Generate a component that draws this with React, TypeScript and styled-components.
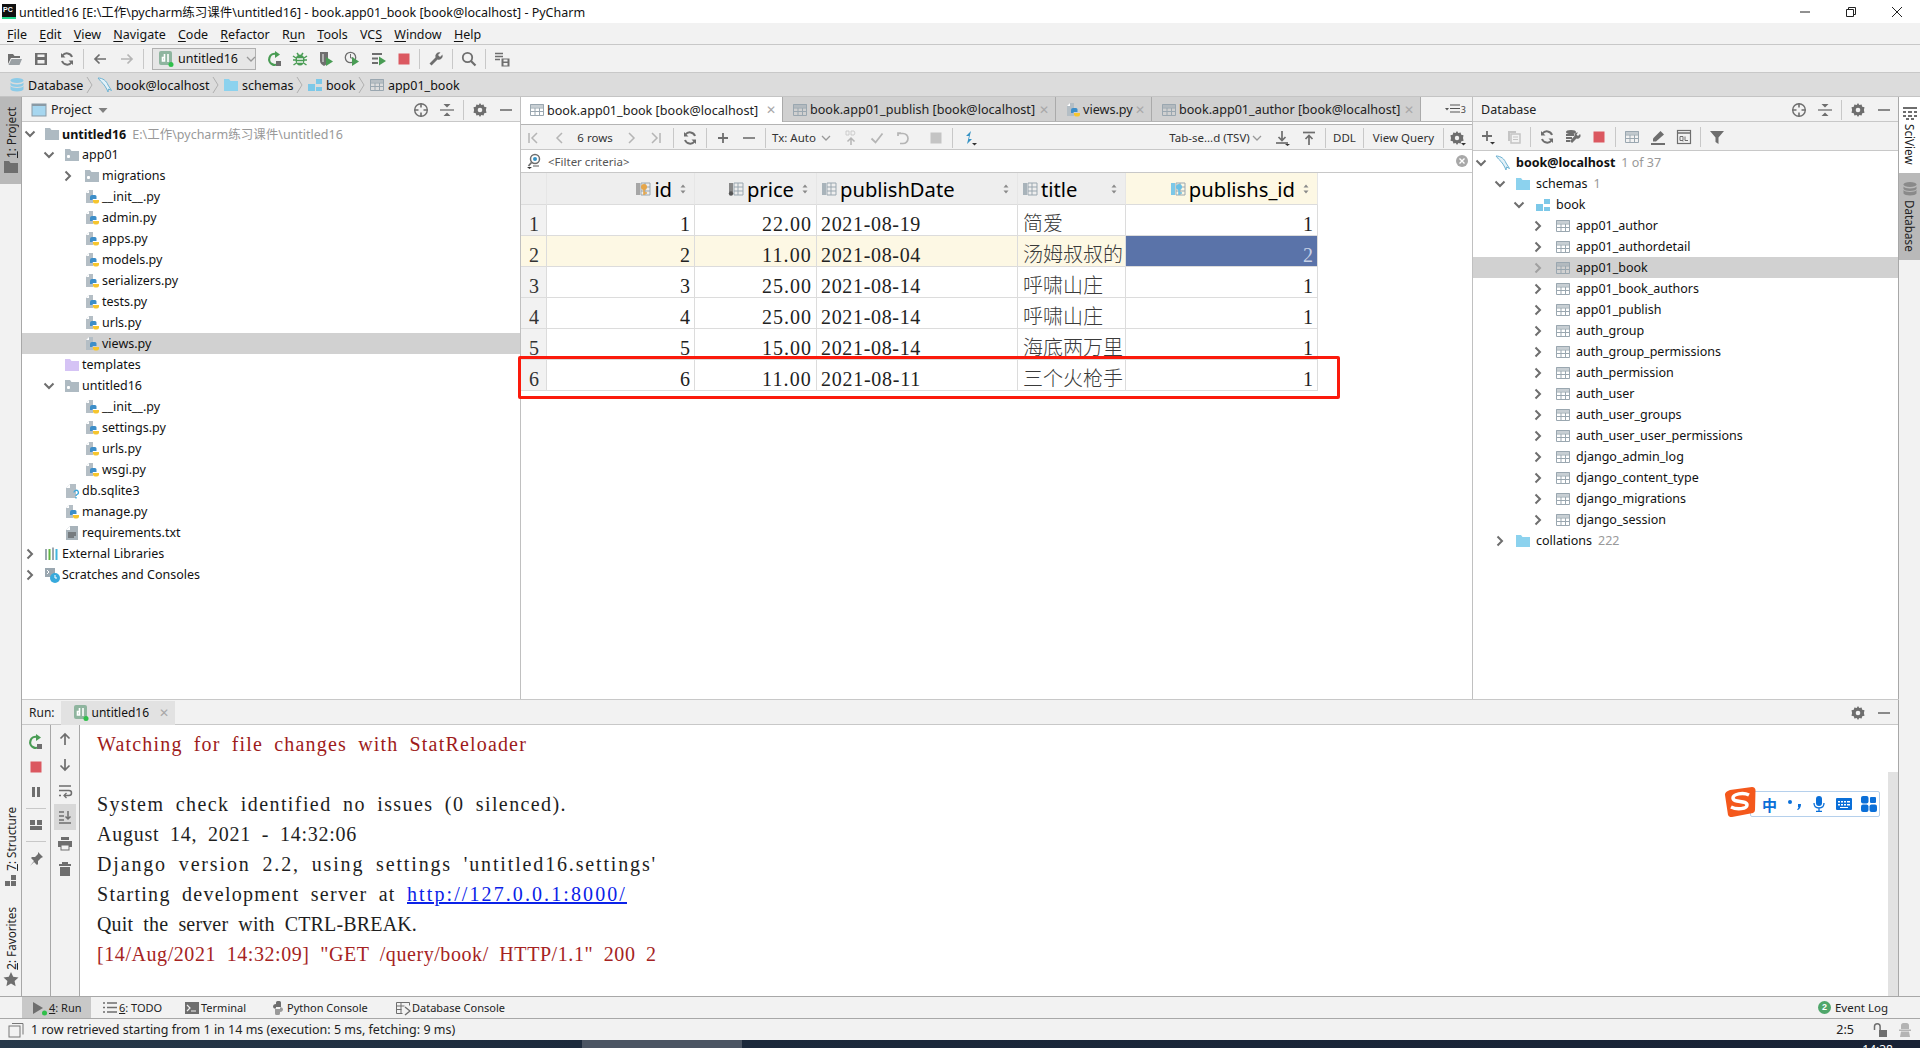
import React from 'react';
import styled, { createGlobalStyle } from 'styled-components';

const GlobalStyle = createGlobalStyle`
  html, body { margin: 0; padding: 0; background: #f2f2f2; }
  body { font-family: "Noto Sans", "Noto Sans CJK SC", sans-serif; font-size: 12.5px; color: #111; }
  * { box-sizing: border-box; }
`;

const Page = styled.div`
  width: 1920px; height: 1048px; overflow: hidden; display: flex; flex-direction: column;
  position: relative; background: #f2f2f2;
`;

/* ---------- glyphs ---------- */
const G = styled.svg.attrs({ viewBox: '0 0 16 16', xmlns: 'http://www.w3.org/2000/svg' })`
  width: 16px; height: 16px; flex: none; display: block;
`;
const GRAY = '#6e6e6e';
const Chevron = ({ open, light }: { open?: boolean; light?: boolean }) => (
  <G><path d={open ? 'M3.5 5.5 8 10l4.5-4.5' : 'M5.5 3.5 10 8l-4.5 4.5'} fill="none" stroke={light ? '#a0a0a0' : GRAY} strokeWidth="2" /></G>
);
const Folder = ({ c = '#aebac2', dot }: { c?: string; dot?: boolean }) => (
  <G><path d="M1 2h5l1.500 2H15v10H1z" fill={c} />{dot && <rect x="3" y="8" width="3" height="3" rx="1" fill="#fff" />}</G>
);
const PyFile = () => (
  <G>
    <path d="M2 4l3-3h4v13H2z" fill="#b4bec5" /><path d="M5 1v3H2z" fill="#fff" />
    <path d="M6 8a2 2 0 0 1 2-2h3a1.500 1.500 0 0 1 1.500 1.500V10H8.500v1H6z" fill="#3d8ec9" />
    <path d="M9 11h6v1.500a2 2 0 0 1-2 2h-2A2 2 0 0 1 9 12.500z" fill="#f6c52e" />
  </G>
);
const DocQ = () => (
  <G><path d="M2 5l4-4h6v14H2z" fill="#b4bec5" /><path d="M6 1v4H2z" fill="#fff" />
    <path d="M10 9.500a2.200 2.200 0 1 1 3 2c-.8.4-1 .8-1 1.500m0 1v1.500" fill="none" stroke="#3aa7dc" strokeWidth="1.300" /></G>
);
const DocText = () => (
  <G><path d="M2 5l4-4h8v14H2z" fill="#a8b3ba" /><path d="M6 1v4H2z" fill="#fff" /><path d="M4 8h8M4 10h8M4 12h6" stroke="#444" strokeWidth="1" /></G>
);
const Libs = () => (
  <G><rect x="1" y="3" width="2" height="11" fill="#9aa7b0" /><rect x="4.500" y="3" width="2" height="11" fill="#62b543" /><rect x="8" y="1.500" width="2" height="12.500" fill="#9aa7b0" /><rect x="11.500" y="3" width="2" height="11" fill="#40b6e0" /></G>
);
const Scratch = () => (
  <G><path d="M1 1h10v9H1z" fill="#9aa7b0" /><path d="M3 3l2 2-2 2" fill="none" stroke="#fff" /><circle cx="11" cy="11" r="5" fill="#36a9dc" /><path d="M11 8v3h2" fill="none" stroke="#fff" /></G>
);
const Dolphin = () => (
  <G><path d="M1 1c5 0 8.500 3 10 7l3.500 5.500-3-1.500-.5 3C9.500 11 7 7 3.500 4z" fill="#e3f1f8" stroke="#6eb3d3" strokeWidth="1" /></G>
);
const Schema = () => (
  <G><rect x="9" y="2" width="6" height="5" fill="#7cc8e8" /><rect x="1" y="7" width="7" height="7" fill="#7cc8e8" /><rect x="9" y="10" width="6" height="4" fill="#7cc8e8" /></G>
);
const TableI = () => (
  <G><path d="M1.500 2.500h13v11h-13z M1.500 6h13 M1.500 9.500h13 M6 6v7.500 M10.500 6v7.500" fill="none" stroke="#9aa7b0" strokeWidth="1" /><rect x="1" y="2" width="14" height="3.500" fill="#9aa7b0" opacity=".55" /></G>
);
const DbStack = ({ c = '#8ccbe8' }: { c?: string }) => (
  <G><ellipse cx="8" cy="3.500" rx="6.500" ry="2.500" fill={c} /><path d="M1.500 5.500c1 2.500 12 2.500 13 0V8c-1 2.500-12 2.500-13 0zM1.500 9c1 2.500 12 2.500 13 0v3.500c-1 2.500-12 2.500-13 0z" fill={c} /></G>
);
const Target = () => (
  <G><circle cx="8" cy="8" r="6.300" fill="none" stroke={GRAY} strokeWidth="1.400" /><path d="M8 1.500v4M8 10.500v4M1.500 8h4M10.500 8h4" stroke={GRAY} strokeWidth="1.600" /></G>
);
const Collapse = () => (
  <G><path d="M1 8h14" stroke={GRAY} strokeWidth="1.300" /><path d="M4.500 2h7L8 5.500zM4.500 14h7L8 10.500z" fill={GRAY} /></G>
);
const Gear = () => (
  <G><path d="M8 1l1.300 2 2.300-.6.600 2.300 2.300.6L13.900 8l.6 2.700-2.300.6-.6 2.300-2.300-.6L8 15l-1.300-2-2.300.6-.6-2.300-2.300-.6L2.100 8l-.6-2.700 2.300-.6.600-2.300 2.300.6z" fill={GRAY} /><circle cx="8" cy="8" r="2.300" fill="#f2f2f2" /></G>
);
const Minus = () => <G><path d="M2 8h12" stroke={GRAY} strokeWidth="1.600" /></G>;
const Arrow = ({ d, c = GRAY }: { d: 'l' | 'r' | 'u' | 'd'; c?: string }) => {
  const p = { l: 'M14 8H3M7.500 3.500 3 8l4.500 4.500', r: 'M2 8h11M8.500 3.500 13 8l-4.500 4.500', u: 'M8 14V3M3.500 7.500 8 3l4.500 4.500', d: 'M8 2v11M3.500 8.500 8 13l4.500-4.500' }[d];
  return <G><path d={p} fill="none" stroke={c} strokeWidth="1.700" /></G>;
};
const OpenFolder = () => <G><path d="M1 3h5l1.500 2H13v2H4L1 13z" fill={GRAY} /><path d="M4.500 8H15l-2.500 6H1.500z" fill="#9aa0a4" /></G>;
const Save = () => <G><path d="M2 2h12v12H2z" fill={GRAY} /><rect x="4.500" y="3.500" width="7" height="2.500" fill="#f2f2f2" /><rect x="4.500" y="9" width="7" height="3.500" fill="#f2f2f2" /></G>;
const Sync = ({ c = GRAY }: { c?: string }) => (
  <G><path d="M13 6a5.500 5.500 0 0 0-9.500-1.500M3 10a5.500 5.500 0 0 0 9.500 1.500" fill="none" stroke={c} strokeWidth="2" /><path d="M2 2v4.500h4.500zM14 14V9.500H9.500z" fill={c} /></G>
);
const ReRun = () => <G><path d="M12.500 11A5.500 5.500 0 1 1 9 3" fill="none" stroke="#499c54" strokeWidth="2.200" /><path d="M8 0l5 3.500L8 7z" fill="#499c54" /><rect x="9" y="10" width="5" height="5" fill={GRAY} /></G>;
const Bug = () => <G><ellipse cx="8" cy="9" rx="4.500" ry="5.500" fill="#499c54" /><path d="M1 5l3 2M15 5l-3 2M1 9h3M15 9h-3M1.500 14l3-2M14.500 14l-3-2M5 2l1.500 2M11 2L9.500 4" stroke="#499c54" strokeWidth="1.500" /><path d="M5 8h6M5 11h6" stroke="#f2f2f2" strokeWidth="1.300" /></G>;
const Cover = () => <G><path d="M2 1h8v9c0 2-2 4-4 5-2-1-4-3-4-5z" fill={GRAY} /><path d="M8 6l7 4.500L8 15z" fill="#499c54" /><path d="M5 3v8" stroke="#f2f2f2" /></G>;
const Profile = () => <G><circle cx="6.500" cy="6.500" r="5.200" fill="none" stroke={GRAY} strokeWidth="1.300" /><path d="M6.500 3v4h3" fill="none" stroke={GRAY} /><path d="M8 6l7 4.500L8 15z" fill="#499c54" /></G>;
const Conc = () => <G><path d="M1 3h10M1 7.500h6M1 12h6" stroke={GRAY} strokeWidth="1.800" /><path d="M8 5.500l7 4.500-7 4.500z" fill="#499c54" /></G>;
const Stop = ({ c = '#db5860' }: { c?: string }) => <G><rect x="2.500" y="2.500" width="11" height="11" fill={c} /></G>;
const Wrench = ({ c = GRAY }: { c?: string }) => <G><path d="M14.500 3.500 12 6 10 4l2.500-2.500A4 4 0 0 0 7.500 6.500L1.500 12.500l2 2 6-6a4 4 0 0 0 5-5z" fill={c} /></G>;
const Search = () => <G><circle cx="6.500" cy="6.500" r="4.700" fill="none" stroke={GRAY} strokeWidth="1.800" /><path d="M10 10l4.500 4.500" stroke={GRAY} strokeWidth="2.200" /></G>;
const SdkI = () => <G><path d="M1 2.500h8M1 5.500h8M1 8.500h5" stroke={GRAY} strokeWidth="1.400" /><path d="M7.500 7.500h8v8h-8z" fill={GRAY} /><rect x="9.500" y="8.500" width="4" height="2" fill="#f2f2f2" /><rect x="9.500" y="12" width="4" height="2.500" fill="#f2f2f2" /></G>;
const DjangoI = () => (
  <G><rect x="1" y="0" width="13" height="14" rx="2" fill="#8fb59f" /><path d="M6.500 3v7H4.500V6.500h2M10 3v8" fill="none" stroke="#fff" strokeWidth="1.600" /><circle cx="13" cy="13.500" r="2.500" fill="#2fbf4a" /></G>
);
const Plus = () => <G><path d="M8 3v10M3 8h10" stroke={GRAY} strokeWidth="1.800" /></G>;
const PlusDrop = () => <G><path d="M7 2v10M2 7h10" stroke={GRAY} strokeWidth="1.800" /><path d="M10 13h5l-2.500 2.500z" fill="#333" /></G>;
const First = () => <G><path d="M4 3v10M12 3L7 8l5 5" fill="none" stroke="#b5b5b5" strokeWidth="1.500" /></G>;
const Prev = () => <G><path d="M10 3L5 8l5 5" fill="none" stroke="#b5b5b5" strokeWidth="1.500" /></G>;
const Next = () => <G><path d="M6 3l5 5-5 5" fill="none" stroke="#b5b5b5" strokeWidth="1.500" /></G>;
const Last = () => <G><path d="M12 3v10M4 3l5 5-5 5" fill="none" stroke="#b5b5b5" strokeWidth="1.500" /></G>;
const DropV = () => <G><path d="M4 6l4 4 4-4" fill="none" stroke="#999" strokeWidth="1.300" /></G>;
const DbUp = () => <G><path d="M8 8v7M4.500 11.500 8 8l3.500 3.500" fill="none" stroke="#b5b5b5" strokeWidth="1.500" /><path d="M3 1h3v4H3zM8 1h3l1 2-1 2H8z" fill="none" stroke="#c4c4c4" strokeWidth=".8" /></G>;
const Check = () => <G><path d="M2.500 8.500 6.500 12.500 13.500 3.500" fill="none" stroke="#b5b5b5" strokeWidth="1.800" /></G>;
const Undo = () => <G><path d="M6 3H3v3M3.500 3.500h4.500a5 5 0 0 1 0 10H5" fill="none" stroke="#b5b5b5" strokeWidth="1.700" /></G>;
const Compare = () => <G><path d="M10 1L5 6h3v3z" fill="#3592c4" /><path d="M6 14l5-5H8V6z" fill="#3592c4" /><path d="M11 13h5l-2.500 2.500z" fill="#333" /></G>;
const Download = () => <G><path d="M2 13h12" stroke={GRAY} strokeWidth="1.700" /><path d="M8 1v9M4.500 7 8 10.500 11.500 7" fill="none" stroke={GRAY} strokeWidth="1.700" /><path d="M11 14h5l-2.500 2z" fill="#333" /></G>;
const Upload = () => <G><path d="M2 2.500h12" stroke={GRAY} strokeWidth="1.700" /><path d="M8 15V6M4.500 9 8 5.500 11.500 9" fill="none" stroke={GRAY} strokeWidth="1.700" /></G>;
const GearDrop = () => <G><path d="M7 1l1.300 2 2.300-.6.600 2.300 2.300.6L13 8l.6 2.700-2.300.6-.6 2.300-2.300-.6L7 15l-1.300-2-2.300.6-.6-2.300-2.300-.6L1 8l-.6-2.700 2.300-.6.600-2.300 2.300.6z" fill={GRAY} /><circle cx="7" cy="8" r="2.200" fill="#f2f2f2" /><path d="M11 13h5l-2.500 2.500z" fill="#333" /></G>;
const FilterSearch = () => <G><circle cx="9" cy="6" r="4.500" fill="#fff" stroke={GRAY} strokeWidth="1.500" /><circle cx="9" cy="6" r="2" fill="#3592c4" /><path d="M5.500 9.500 2.500 13" stroke={GRAY} strokeWidth="1.800" /><path d="M1 14h5l-2.500 2z" fill="#333" /><path d="M7 12l6 0 0 2h-6z" fill="#aaa" /></G>;
const ClearX = () => <G><circle cx="8" cy="8" r="6" fill="#a8a8a8" /><path d="M5.500 5.500l5 5M10.500 5.500l-5 5" stroke="#fff" strokeWidth="1.400" /></G>;
const TabList = () => <G><path d="M0 7h4L2 9.500z" fill="#555" /><path d="M5 4h10M5 7.500h10M5 11h10" stroke="#555" strokeWidth="1.200" /></G>;
const Copy = () => <G><path d="M2 2h8v2H4v8H2z" fill="#c4c4c4" /><path d="M5 5h9v9H5z" fill="none" stroke="#c4c4c4" strokeWidth="1.500" /><path d="M7 8h5M7 10.500h5" stroke="#c4c4c4" /></G>;
const DbWrench = () => <G><ellipse cx="6" cy="3" rx="5" ry="2" fill={GRAY} /><path d="M1 6h8M1 9h6M1 12h4" stroke={GRAY} strokeWidth="1.800" /><path d="M15 5l-2 2-1.500-1.500 1.500-2a3 3 0 0 0-3.500 3.500L5 12l2 2 4.500-4.500A3 3 0 0 0 15 5z" fill={GRAY} /></G>;
const Pencil = () => <G><path d="M10.500 2 14 5.500 6 12.500H3V9.500z" fill={GRAY} /><rect x="1" y="14" width="14" height="2" fill={GRAY} /></G>;
const QL = () => <G><rect x="1.500" y="1.500" width="13" height="13" fill="none" stroke={GRAY} strokeWidth="1.200" /><path d="M1.500 4h13" stroke={GRAY} strokeWidth="1.500" /><path d="M4 7.500h3v4H4zM7 12.500l-1.500-1.500M9 7.500v4h3" fill="none" stroke={GRAY} strokeWidth="1" /></G>;
const Funnel = () => <G><path d="M1 2h14L9.500 8.500V15l-3-2V8.500z" fill={GRAY} /></G>;
const Pause = () => <G><rect x="4" y="3" width="3" height="10" fill={GRAY} /><rect x="9" y="3" width="3" height="10" fill={GRAY} /></G>;
const Layout = () => <G><rect x="2" y="3" width="5" height="5" fill={GRAY} /><rect x="9" y="3" width="5" height="5" fill={GRAY} /><rect x="2" y="9" width="12" height="4" fill={GRAY} /></G>;
const Pin = () => <G><path d="M10 1l5 5-2 1-3 3 0 3-1 1-3-3-4 4 4-5-3-3 1-1h3l3-3z" fill={GRAY} /></G>;
const Wrap = () => <G><path d="M2 3h12M2 7.500h10a2.500 2.500 0 0 1 0 5H8M2 12.500h2" fill="none" stroke={GRAY} strokeWidth="1.500" /><path d="M9.500 10 7 12.500 9.500 15" fill="none" stroke={GRAY} strokeWidth="1.300" /></G>;
const ScrollEnd = () => <G><path d="M2 3h5M2 7h5M2 11h5" stroke={GRAY} strokeWidth="1.400" /><path d="M11 2v8M8.500 7.500 11 10l2.500-2.500" fill="none" stroke={GRAY} strokeWidth="1.500" /><path d="M2 14h12" stroke={GRAY} strokeWidth="1.500" /></G>;
const Printer = () => <G><rect x="4" y="2" width="8" height="3" fill={GRAY} /><rect x="1" y="6" width="14" height="6" fill={GRAY} /><rect x="4" y="10" width="8" height="5" fill="#f2f2f2" stroke={GRAY} /></G>;
const Trash = () => <G><rect x="5" y="1" width="6" height="2" fill={GRAY} /><rect x="2" y="3" width="12" height="2" fill={GRAY} /><rect x="3" y="6" width="10" height="9" fill={GRAY} /></G>;
const ProjectPane = () => <G><rect x="1" y="2" width="14" height="12" fill="#a6d6ef" stroke="#8a9aa5" /><rect x="1" y="2" width="14" height="2" fill="#8a9aa5" /></G>;
const Caret = () => <G><path d="M2.500 6h9L7 11z" fill="#808080" /></G>;
const SortArrows = () => <G><path d="M5.500 6.500 8 3.500l2.500 3zM5.500 9.500 8 12.500l2.500-3z" fill="#8a8a8a" /></G>;
const ColI = ({ k }: { k?: string }) => (
  <G><path d="M6 2h9v12H6z" fill="none" stroke="#9aa7b0" /><path d="M6 6h9M6 10h9M10 2v12" stroke="#9aa7b0" />
    {k === 'gold' && <><rect x="1" y="2" width="4" height="12" fill="#a6a6a6" /><circle cx="9" cy="6" r="3" fill="#e5a64b" /><path d="M9 8v6M9 12h3" stroke="#e5a64b" strokeWidth="1.600" /></>}
    {k === 'dot' && <><rect x="1" y="2" width="4" height="9" fill="#888" /><circle cx="3" cy="12.500" r="2.200" fill="#555" /></>}
    {k === 'blue' && <><rect x="1" y="2" width="4" height="12" fill="#7cc8e8" /><circle cx="9" cy="6" r="3" fill="#6cc0e4" /><path d="M9 8v6M9 12h3" stroke="#6cc0e4" strokeWidth="1.600" /></>}
    {!k && <rect x="1" y="2" width="4" height="12" fill="#a8b3ba" />}
  </G>
);
const PlayDot = () => <G><path d="M1 2l10 6-10 6z" fill={GRAY} /><circle cx="12.500" cy="13" r="2.500" fill="#2fbf4a" /></G>;
const ListI = () => <G><path d="M1 3h2M1 7.500h2M1 12h2M5 3h10M5 7.500h10M5 12h10" stroke={GRAY} strokeWidth="1.300" /></G>;
const TermI = () => <G><rect x="1" y="2" width="14" height="12" fill={GRAY} /><path d="M3 5l3 3-3 3M7 11h5" fill="none" stroke="#f2f2f2" strokeWidth="1.200" /></G>;
const PySnake = () => <G><path d="M3 7a3 3 0 0 1 3-3V2.500A1.500 1.500 0 0 1 7.500 1h2A1.500 1.500 0 0 1 11 2.500V7H6v1.500H4z" fill={GRAY} /><path d="M13 9a3 3 0 0 1-3 3v1.500A1.500 1.500 0 0 1 8.500 15h-2A1.500 1.500 0 0 1 5 13.500V9h5V7.500h2z" fill="#9a9a9a" /></G>;
const DbConsole = () => <G><path d="M1.500 2.500h13v3M1.500 2.500v11h6M1.500 6h8M1.500 9.500h5M6 2.500v11" fill="none" stroke={GRAY} /><path d="M10 7l5 4-5 4" fill="none" stroke={GRAY} strokeWidth="1.400" /></G>;
const Square = () => <G><rect x="1" y="4" width="11" height="11" fill="#f2f2f2" stroke="#777" /><path d="M4 1.500h11v11" fill="none" stroke="#777" /></G>;
const Lock = () => <G><rect x="7" y="8" width="8" height="7" fill={GRAY} /><path d="M2.500 8V4.500a2.800 2.800 0 0 1 5.600 0V8" fill="none" stroke={GRAY} strokeWidth="1.500" /></G>;
const Hector = () => <G><path d="M4 7V3.500a2.500 2.500 0 0 1 2.500-2.500h3A2.500 2.500 0 0 1 12 3.500V7zM2 7.500h12V9H2zM4 9.500h8L13 15H3z" fill="#b4b4b4" /></G>;
const Star = () => <G><path d="M8 1l2.200 4.800 5.300.6-3.900 3.600 1 5.200L8 12.600 3.400 15.200l1-5.200L.5 6.400l5.300-.6z" fill={GRAY} /></G>;
const StructI = () => <G><rect x="8" y="3" width="5" height="5" fill={GRAY} /><rect x="2" y="9" width="5" height="5" fill={GRAY} /><rect x="8" y="9" width="5" height="5" fill={GRAY} /></G>;
const FolderSolid = () => <G><path d="M1 2h5l1.500 2H15v10H1z" fill={GRAY} /></G>;
const SciI = () => <G><path d="M1 2h14v2H1zM1 6h3v2H1zM6 6h4v2H6zM12 6h3v2h-3zM1 10h3v2H1zM6 10h4v2H6zM12 10h3v2h-3zM4 13h3v2H4zM9 13h3v2H9z" fill={GRAY} /></G>;

/* ---------- chrome ---------- */
const TitleBar = styled.header`
  height: 23px; background: #fff; display: flex; align-items: center; flex: none;
  font-size: 12.5px; color: #111; padding-left: 2px;
`;
const TitleLogo = styled.span`
  width: 14px; height: 15px; background: #111; color: #fff; font: 700 7px/9px "Liberation Sans", sans-serif;
  border-bottom: 2px solid #21d789; padding: 1px 0 0 1px; margin-right: 3px; flex: none;
`;
const TitleText = styled.span`flex: 1; white-space: nowrap;`;
const WinBtn = styled.span`width: 46px; height: 23px; display: flex; align-items: center; justify-content: center; flex: none;`;
const WinGlyph = styled.svg.attrs({ viewBox: '0 0 12 12' })`width: 12px; height: 12px;`;

const MenuBar = styled.nav`
  height: 22px; flex: none; border-bottom: 1px solid #c8c8c8; display: flex; align-items: center;
  padding: 1px 0 0 7px; gap: 12.200px; background: #f2f2f2;
`;
const MenuItem = styled.span`white-space: nowrap;`;
const Mnemonic = styled.u`text-underline-offset: 2px;`;

const ToolRow = styled.div<{ $h: number; $pt?: number }>`
  height: ${p => p.$h}px; flex: none; display: flex; align-items: center; background: #f2f2f2;
  border-bottom: 1px solid #c8c8c8; padding-top: ${p => p.$pt ?? 0}px;
`;
const Slot = styled.span<{ $w: number; $ml?: number }>`
  width: ${p => p.$w}px; margin-left: ${p => p.$ml ?? 0}px; flex: none; display: flex; align-items: center;
  justify-content: center; white-space: nowrap;
`;
const SmallLabel = styled(Slot)`font-size: 11.500px; color: #333;`;
const Sep = styled.i<{ $ml?: number; $mr?: number }>`
  width: 1px; height: 20px; flex: none; background: #c8c8c8; margin-left: ${p => p.$ml ?? 0}px; margin-right: ${p => p.$mr ?? 0}px;
`;
const Push = styled.span`flex: 1;`;
const RunCombo = styled.div`
  width: 104px; height: 22px; margin-left: 8px; border: 1px solid #b0b0b0; background: #e6e6e6; display: flex;
  align-items: center; flex: none; padding-left: 5px; gap: 4px; white-space: nowrap;
`;

const NavBar = styled.div`
  height: 24px; flex: none; background: #dcdcdc; border-bottom: 1px solid #c4c4c4; display: flex; align-items: center; padding: 1px 0 0 9px;
`;
const Crumb = styled.span`display: flex; align-items: center; gap: 3px; white-space: nowrap;`;
const CrumbSep = styled.svg.attrs({ viewBox: '0 0 8 20' })`
  width: 8px; height: 20px; margin: 0 3px 0 2.500px; flex: none; fill: none; stroke: #b0b0b0;
`;

const Main = styled.div`flex: 1; min-height: 0; display: flex;`;
const LeftStripe = styled.aside`
  width: 22px; flex: none; background: #f2f2f2; border-right: 1px solid #a8a8a8; display: flex; flex-direction: column;
  justify-content: space-between;
`;
const RightStripe = styled.aside`width: 21px; flex: none; background: #f2f2f2; display: flex; flex-direction: column;`;
const StripeTab = styled.div<{ $active?: boolean; $white?: boolean; $h?: number; $flip?: boolean }>`
  height: ${p => (p.$h ? `${p.$h}px` : 'auto')}; display: flex; flex-direction: column;
  align-items: center; justify-content: flex-start; gap: ${p => (p.$flip ? 3 : 1)}px;
  background: ${p => (p.$active ? '#b9b9b9' : p.$white ? '#fff' : 'transparent')};
  padding: ${p => (p.$flip ? '8px 0 0' : '10px 0 9px')};
  font-size: 11.700px; color: #222;
`;
const VText = styled.span<{ $flip?: boolean }>`
  writing-mode: vertical-rl; white-space: nowrap; transform: ${p => (p.$flip ? 'none' : 'rotate(180deg)')};
`;
const Center = styled.div`flex: 1; min-width: 0; display: flex; flex-direction: column;`;
const TopSplit = styled.div`height: 603px; flex: none; display: flex; border-bottom: 1px solid #c8c8c8;`;

const Pane = styled.section<{ $w: number; $dark?: boolean }>`
  width: ${p => p.$w}px; flex: none; display: flex; flex-direction: column; background: #fff; min-height: 0;
  border-right: 1px solid ${p => (p.$dark ? '#a8a8a8' : '#c0c0c0')};
`;
const PaneHead = styled.div`
  height: 25px; flex: none; background: #f2f2f2; border-bottom: 1px solid #c8c8c8; display: flex; align-items: center; padding: 1px 1px 0 0;
`;
const PaneTitle = styled.span<{ $ml: number }>`margin-left: ${p => p.$ml}px; color: #222;`;
const Tree = styled.div<{ $top: number }>`padding-top: ${p => p.$top}px;`;
const Row = styled.div<{ $level: number; $sel?: boolean; $gap?: number }>`
  height: 21px; display: flex; align-items: center; white-space: nowrap;
  padding-left: ${p => p.$level * 19}px;
  background: ${p => (p.$sel ? '#d1d1d1' : 'transparent')};
  & > span:nth-child(2) { margin-left: ${p => 6 + p.$level}px; }
  & > label { margin-left: ${p => p.$gap ?? 2}px; }
`;
const ChevSlot = styled.i<{ $off?: boolean }>`
  width: 16px; flex: none; display: block; visibility: ${p => (p.$off ? 'hidden' : 'visible')};
`;
const IconSlot = styled.span`width: 16px; flex: none; display: block;`;
const Name = styled.label<{ $bold?: boolean }>`font-weight: ${p => (p.$bold ? 700 : 400)};`;
const Hint = styled.em`font-style: normal; font-weight: 400; color: #999; margin-left: 6px;`;

/* editor */
const Tabs = styled.div`height: 25px; flex: none; display: flex; background: #f2f2f2; border-bottom: 1px solid #b4b4b4; font-size: 12.6px;`;
const Tab = styled.div<{ $w: number; $active?: boolean; $pl: number }>`
  width: ${p => p.$w}px; flex: none; display: flex; align-items: center; gap: 2px; padding: 1px 0 0 ${p => p.$pl}px; white-space: nowrap;
  background: ${p => (p.$active ? '#fff' : '#d0d0d0')}; border-right: 1px solid #aaa; color: #222;
  margin-bottom: ${p => (p.$active ? '-1px' : 0)}; position: relative; z-index: ${p => (p.$active ? 1 : 0)};
`;
const TabClose = styled.span`color: #a8a8a8; font-size: 12px; margin-left: auto; padding-right: 6px; font-family: "Liberation Sans", sans-serif;`;
const TabMore = styled.div`flex: 1; display: flex; align-items: center; justify-content: flex-end; padding-right: 6px; font-size: 9px; color: #444;`;
const TabStrip = styled.div`height: 3px; flex: none; background: #fff; border-bottom: 1px solid #b4b4b4;`;
const FilterRow = styled.div`
  height: 23px; flex: none; display: flex; align-items: center; padding: 0 2px 0 5px; gap: 6px; background: #fff;
  border-bottom: 1px solid #c8c8c8; color: #555; font-size: 11.500px;
`;
const TableWrap = styled.div`position: relative; width: 797px; flex: none;`;
const Grid = styled.div`
  display: grid; grid-template-columns: 26px 148px 122px 201px 108px 192px; grid-template-rows: 32px; grid-auto-rows: 31px;
`;
const HeadCell = styled.div<{ $end?: boolean; $hot?: boolean }>`
  display: flex; align-items: center; justify-content: ${p => (p.$end ? 'flex-end' : 'flex-start')};
  background: ${p => (p.$hot ? '#fdf8e4' : '#eeeeee')}; border-right: 1px solid #e6e6e6; border-bottom: 1px solid #dcdcdc;
  font-size: 20.200px; color: #000; padding: 0 3px 0 4px; gap: 3px; white-space: nowrap;
`;
const SortSlot = styled.span<{ $auto?: boolean }>`margin-left: ${p => (p.$auto ? 'auto' : '0')}; display: flex;`;
const NumCell = styled.div<{ $hot?: boolean }>`
  background: ${p => (p.$hot ? '#fdf8e4' : '#f2f2f2')}; border-right: 1px solid #dcdcdc; border-bottom: 1px solid #dcdcdc;
  display: flex; align-items: center; padding: 8px 0 0 8px; font: 20px "Liberation Serif", serif; color: #333;
`;
const Cell = styled.div<{ $end?: boolean; $hot?: boolean; $sel?: boolean }>`
  display: flex; align-items: center; justify-content: ${p => (p.$end ? 'flex-end' : 'flex-start')};
  padding: 8px 4px 0; border-right: 1px solid #dcdcdc; border-bottom: 1px solid #dcdcdc;
  background: ${p => (p.$sel ? '#5a73a9' : p.$hot ? '#fdf8e4' : '#fff')};
  color: ${p => (p.$sel ? '#c8d2e6' : '#222')}; font: 20px "Liberation Serif", serif; white-space: nowrap;
`;
const CjkText = styled.span`font: 300 20px/1 "Noto Sans CJK SC", sans-serif; color: #3a3a3a; margin: -3px 0 0 1px;`;
const RedBox = styled.div`
  position: absolute; left: -3px; top: 183px; width: 822px; height: 43px; border: 3px solid #fb1a0c; border-radius: 2px;
`;

/* run */
const RunPanel = styled.section`
  flex: 1; min-height: 0; display: flex; flex-direction: column; background: #fff; border-right: 1px solid #a8a8a8;
`;
const RunTitle = styled.span`margin: 0 6px 0 7px; color: #222; font-size: 12px;`;
const RunTab = styled.div`
  height: 24px; width: 114px; background: #e2e2e2; display: flex; align-items: center; gap: 3px; padding-left: 12px; flex: none; white-space: nowrap; font-size: 12px;
`;
const RunBody = styled.div`flex: 1; min-height: 0; display: flex;`;
const ActionCol = styled.div<{ $pt: number }>`
  width: 29px; flex: none; background: #f2f2f2; border-right: 1px solid #a8a8a8; display: flex; flex-direction: column; align-items: center; padding-top: ${p => p.$pt}px;
`;
const ActionBtn = styled.span<{ $h?: number; $on?: boolean }>`
  height: ${p => p.$h ?? 26}px; width: 22px; flex: none; display: flex; align-items: center; justify-content: center;
  background: ${p => (p.$on ? '#d8d8d8' : 'transparent')};
`;
const ActionRule = styled.i`width: 20px; height: 1px; background: #c8c8c8; flex: none; margin: 4px 0;`;
const Console = styled.div`
  flex: 1; min-width: 0; position: relative; padding: 4px 0 0 17px; font: 20px/30px "Liberation Serif", serif;
  color: #1e1e1e; white-space: pre;
`;
const Line = styled.div`height: 30px;`;
const Red = styled.span`color: #9e1b1b;`;
const BrightRed = styled.span`color: #a52323;`;
const Link = styled.a`color: #0b22e8; text-decoration: underline;`;
const ScrollGutter = styled.div`width: 10px; margin-top: 47px; background: #e2e2e2; flex: none;`;

const Ime = styled.div`
  position: absolute; right: 8px; top: 66px; width: 130px; height: 26px; border: 1px solid #b5d0ec; border-radius: 2px; background: #fff;
  display: flex; align-items: center; padding-left: 11px; gap: 9px;
`;
const ImeLogo = styled.svg.attrs({ viewBox: '0 0 32 30' })`position: absolute; left: -27px; top: -5px; width: 32px; height: 30px;`;
const ImeZh = styled.span`font: 700 15px/1 "Noto Sans CJK SC", sans-serif; color: #0a6fd8;`;
const ImeG = styled.svg.attrs({ viewBox: '0 0 16 16' })`width: 16px; height: 16px; flex: none; fill: #0a6fd8;`;

const ToolWindowBar = styled.div`
  height: 23px; flex: none; background: #f2f2f2; border-top: 1px solid #a8a8a8; border-bottom: 1px solid #a8a8a8; display: flex; align-items: stretch; padding-left: 22px;
`;
const TwItem = styled.span<{ $w: number; $on?: boolean; $pl: number }>`
  width: ${p => p.$w}px; flex: none; display: flex; align-items: center; gap: 1px; padding-left: ${p => p.$pl}px; white-space: nowrap;
  background: ${p => (p.$on ? '#c8c8c8' : 'transparent')}; color: #222; font-size: 11px;
`;
const TwRight = styled.span`margin-left: auto; display: flex; align-items: center; gap: 4px; padding-right: 32px; white-space: nowrap; color: #222; font-size: 11.500px;`;
const Badge = styled.span`
  width: 13px; height: 13px; border-radius: 50%; background: #4fa66a; color: #fff; font: 700 9px/13px "Liberation Sans", sans-serif; text-align: center;
`;
const StatusBar = styled.footer`
  height: 21px; flex: none; background: #f2f2f2; display: flex; align-items: center; padding-left: 8px; gap: 7px; white-space: nowrap; font-size: 12.500px; color: #222;
`;
const StatusRight = styled.span`margin-left: auto; display: flex; align-items: center; padding-right: 7px;`;
const Taskbar = styled.div`
  height: 8px; flex: none; display: flex; overflow: hidden;
  background: linear-gradient(90deg, #27394a 0, #1c2a3c 30%, #182235 100%);
`;
const TaskActive = styled.span`width: 160px; margin-left: 582px; background: #4b5563; flex: none;`;
const Clock = styled.span`margin-left: auto; padding: 4px 27px 0 0; color: #fff; font-size: 12px; line-height: 12px;`;

/* ---------- mono text: a proportional serif spread out to the 10px cell of the reference's SimSun ---------- */
let ctx: CanvasRenderingContext2D | null = null;
const cellStyle = (t: string): React.CSSProperties => {
  if (!ctx) ctx = document.createElement('canvas').getContext('2d');
  if (!ctx) return {};
  ctx.font = '20px "Liberation Serif"';
  const spaces = t.split(' ').length - 1;
  const w = ctx.measureText(t).width + spaces * 5;
  return { letterSpacing: `${(t.length * 10 - w) / t.length}px`, wordSpacing: '5px' };
};
const Mono = ({ t }: { t: string }) => <span style={cellStyle(t)}>{t}</span>;

/* ---------- data ---------- */
type N = { level: number; name: string; icon: React.ReactNode; chev?: 'o' | 'c'; sel?: boolean; bold?: boolean; hint?: string };
const mod = <Folder dot />;
const py = <PyFile />;
const projectTree: N[] = [
  { level: 0, name: 'untitled16', icon: <Folder />, chev: 'o', bold: true, hint: 'E:\\工作\\pycharm练习课件\\untitled16' },
  { level: 1, name: 'app01', icon: mod, chev: 'o' },
  { level: 2, name: 'migrations', icon: mod, chev: 'c' },
  { level: 2, name: '__init__.py', icon: py },
  { level: 2, name: 'admin.py', icon: py },
  { level: 2, name: 'apps.py', icon: py },
  { level: 2, name: 'models.py', icon: py },
  { level: 2, name: 'serializers.py', icon: py },
  { level: 2, name: 'tests.py', icon: py },
  { level: 2, name: 'urls.py', icon: py },
  { level: 2, name: 'views.py', icon: py, sel: true },
  { level: 1, name: 'templates', icon: <Folder c="#d5c3f5" /> },
  { level: 1, name: 'untitled16', icon: mod, chev: 'o' },
  { level: 2, name: '__init__.py', icon: py },
  { level: 2, name: 'settings.py', icon: py },
  { level: 2, name: 'urls.py', icon: py },
  { level: 2, name: 'wsgi.py', icon: py },
  { level: 1, name: 'db.sqlite3', icon: <DocQ /> },
  { level: 1, name: 'manage.py', icon: py },
  { level: 1, name: 'requirements.txt', icon: <DocText /> },
  { level: 0, name: 'External Libraries', icon: <Libs />, chev: 'c' },
  { level: 0, name: 'Scratches and Consoles', icon: <Scratch />, chev: 'c' },
];
const tables = ['app01_author', 'app01_authordetail', 'app01_book', 'app01_book_authors', 'app01_publish', 'auth_group', 'auth_group_permissions', 'auth_permission', 'auth_user', 'auth_user_groups', 'auth_user_user_permissions', 'django_admin_log', 'django_content_type', 'django_migrations', 'django_session'];
const dbTree: N[] = [
  { level: 0, name: 'book@localhost', icon: <Dolphin />, chev: 'o', bold: true, hint: '1 of 37' },
  { level: 1, name: 'schemas', icon: <Folder c="#8cd2ee" />, chev: 'o', hint: '1' },
  { level: 2, name: 'book', icon: <Schema />, chev: 'o' },
  ...tables.map(t => ({ level: 3, name: t, icon: <TableI />, chev: 'c' as const, sel: t === 'app01_book' })),
  { level: 1, name: 'collations', icon: <Folder c="#8cd2ee" />, chev: 'c', hint: '222' },
];
const rows = [
  ['1', '1', '22.00', '2021-08-19', '简爱', '1'],
  ['2', '2', '11.00', '2021-08-04', '汤姆叔叔的', '2'],
  ['3', '3', '25.00', '2021-08-14', '呼啸山庄', '1'],
  ['4', '4', '25.00', '2021-08-14', '呼啸山庄', '1'],
  ['5', '5', '15.00', '2021-08-14', '海底两万里', '1'],
  ['6', '6', '11.00', '2021-08-11', '三个火枪手', '1'],
];
const menus: [string, string, string][] = [['', 'F', 'ile'], ['', 'E', 'dit'], ['', 'V', 'iew'], ['', 'N', 'avigate'], ['', 'C', 'ode'], ['', 'R', 'efactor'], ['R', 'u', 'n'], ['', 'T', 'ools'], ['VC', 'S', ''], ['', 'W', 'indow'], ['', 'H', 'elp']];

const TreeView = ({ items, gap, top }: { items: N[]; gap: number; top: number }) => (
  <Tree $top={top}>
    {items.map((n, i) => (
      <Row key={i} $level={n.level} $sel={n.sel} $gap={gap}>
        <ChevSlot $off={!n.chev}><Chevron open={n.chev === 'o'} light={n.sel} /></ChevSlot>
        <IconSlot>{n.icon}</IconSlot>
        <Name $bold={n.bold}>{n.name}{n.hint && <Hint>{n.hint}</Hint>}</Name>
      </Row>
    ))}
  </Tree>
);
const PaneTools = () => (
  <>
    <Push />
    <Slot $w={26}><Target /></Slot><Slot $w={26}><Collapse /></Slot>
    <Sep $ml={3} $mr={3} />
    <Slot $w={26}><Gear /></Slot><Slot $w={26}><Minus /></Slot>
  </>
);

export default function App() {
  return (
    <Page>
      <GlobalStyle />
      <TitleBar>
        <TitleLogo>PC</TitleLogo>
        <TitleText>untitled16 [E:\工作\pycharm练习课件\untitled16] - book.app01_book [book@localhost] - PyCharm</TitleText>
        <WinBtn><WinGlyph><path d="M1 6h10" stroke="#222" /></WinGlyph></WinBtn>
        <WinBtn><WinGlyph><path d="M1.500 3.500h7v7h-7zM3.500 3.500v-2h7v7h-2" fill="none" stroke="#222" /></WinGlyph></WinBtn>
        <WinBtn><WinGlyph><path d="M1 1l10 10M11 1L1 11" stroke="#222" /></WinGlyph></WinBtn>
      </TitleBar>
      <MenuBar>
        {menus.map(([a, m, b]) => <MenuItem key={a + m + b}>{a}<Mnemonic>{m}</Mnemonic>{b}</MenuItem>)}
      </MenuBar>
      <ToolRow $h={28}>
        <Slot $w={30}><OpenFolder /></Slot><Slot $w={22}><Save /></Slot><Slot $w={30}><Sync /></Slot>
        <Sep $ml={1} />
        <Slot $w={32}><Arrow d="l" /></Slot><Slot $w={22}><Arrow d="r" c="#b5b5b5" /></Slot>
        <Sep $ml={5} />
        <RunCombo><DjangoI /><span>untitled16</span><Slot $w={12} $ml={3}><DropV /></Slot></RunCombo>
        <Slot $w={26} $ml={6}><ReRun /></Slot><Slot $w={24}><Bug /></Slot><Slot $w={28}><Cover /></Slot><Slot $w={24}><Profile /></Slot><Slot $w={30}><Conc /></Slot><Slot $w={20}><Stop /></Slot>
        <Sep $ml={5} />
        <Slot $w={32}><Wrench /></Slot><Sep /><Slot $w={32}><Search /></Slot><Sep /><Slot $w={32}><SdkI /></Slot>
      </ToolRow>
      <NavBar>
        <Crumb><DbStack /><span>Database</span></Crumb><CrumbSep><path d="M1 2l5 8-5 8" /></CrumbSep>
        <Crumb><Dolphin /><span>book@localhost</span></Crumb><CrumbSep><path d="M1 2l5 8-5 8" /></CrumbSep>
        <Crumb><Folder c="#8cd2ee" /><span>schemas</span></Crumb><CrumbSep><path d="M1 2l5 8-5 8" /></CrumbSep>
        <Crumb><Schema /><span>book</span></Crumb><CrumbSep><path d="M1 2l5 8-5 8" /></CrumbSep>
        <Crumb><TableI /><span>app01_book</span></Crumb>
      </NavBar>
      <Main>
        <LeftStripe>
          <StripeTab $active $h={87}>
            <VText><u>1</u>: Project</VText>
            <FolderSolid />
          </StripeTab>
          <div>
            <StripeTab>
              <VText><u>7</u>: Structure</VText>
              <StructI />
            </StripeTab>
            <StripeTab>
              <VText><u>2</u>: Favorites</VText>
              <Star />
            </StripeTab>
          </div>
        </LeftStripe>
        <Center>
          <TopSplit>
            <Pane $w={499}>
              <PaneHead>
                <Slot $w={16} $ml={9}><ProjectPane /></Slot>
                <PaneTitle $ml={4}>Project</PaneTitle>
                <Slot $w={16} $ml={4}><Caret /></Slot>
                <PaneTools />
              </PaneHead>
              <TreeView items={projectTree} gap={2} top={1} />
            </Pane>
            <Pane $w={952}>
              <Tabs>
                <Tab $w={262} $pl={8} $active><TableI /><span>book.app01_book [book@localhost]</span><TabClose>✕</TabClose></Tab>
                <Tab $w={273} $pl={9}><TableI /><span>book.app01_publish [book@localhost]</span><TabClose>✕</TabClose></Tab>
                <Tab $w={96} $pl={9}><PyFile /><span>views.py</span><TabClose>✕</TabClose></Tab>
                <Tab $w={269} $pl={9}><TableI /><span>book.app01_author [book@localhost]</span><TabClose>✕</TabClose></Tab>
                <TabMore><TabList />3</TabMore>
              </Tabs>
              <TabStrip />
              <ToolRow $h={25} $pt={1}>
                <Slot $w={24}><First /></Slot><Slot $w={30}><Prev /></Slot><SmallLabel $w={40}>6 rows</SmallLabel><Slot $w={32}><Next /></Slot><Slot $w={18}><Last /></Slot>
                <Sep $ml={8} />
                <Slot $w={32}><Sync /></Slot><Sep />
                <Slot $w={32}><Plus /></Slot><Slot $w={20}><Minus /></Slot>
                <Sep $ml={6} />
                <SmallLabel $w={56}>Tx: Auto</SmallLabel><Slot $w={8}><DropV /></Slot>
                <Slot $w={24} $ml={9}><DbUp /></Slot><Slot $w={28}><Check /></Slot><Slot $w={24}><Undo /></Slot>
                <Slot $w={28} $ml={7}><Stop c="#c4c4c4" /></Slot>
                <Sep $ml={2} />
                <Slot $w={32}><Compare /></Slot>
                <Push />
                <SmallLabel $w={81}>Tab-se...d (TSV)</SmallLabel><Slot $w={14}><DropV /></Slot>
                <Slot $w={36}><Download /></Slot><Slot $w={18}><Upload /></Slot>
                <Sep $ml={7} />
                <SmallLabel $w={37}>DDL</SmallLabel><Sep /><SmallLabel $w={79}>View Query</SmallLabel><Sep />
                <Slot $w={28}><GearDrop /></Slot>
              </ToolRow>
              <FilterRow><FilterSearch /><span>&lt;Filter criteria&gt;</span><Push /><ClearX /></FilterRow>
              <TableWrap>
                <Grid>
                  <HeadCell />
                  <HeadCell $end><ColI k="gold" /><span>id</span><SortSlot><SortArrows /></SortSlot></HeadCell>
                  <HeadCell $end><ColI k="dot" /><span>price</span><SortSlot><SortArrows /></SortSlot></HeadCell>
                  <HeadCell><ColI /><span>publishDate</span><SortSlot $auto><SortArrows /></SortSlot></HeadCell>
                  <HeadCell><ColI /><span>title</span><SortSlot $auto><SortArrows /></SortSlot></HeadCell>
                  <HeadCell $end $hot><ColI k="blue" /><span>publishs_id</span><SortSlot><SortArrows /></SortSlot></HeadCell>
                  {rows.map((r, i) => {
                    const hot = i === 1;
                    return (
                      <React.Fragment key={r[0]}>
                        <NumCell $hot={hot}>{r[0]}</NumCell>
                        <Cell $end $hot={hot}>{r[1]}</Cell>
                        <Cell $end $hot={hot}><Mono t={r[2]} /></Cell>
                        <Cell $hot={hot}><Mono t={r[3]} /></Cell>
                        <Cell $hot={hot}><CjkText>{r[4]}</CjkText></Cell>
                        <Cell $end $sel={hot}>{r[5]}</Cell>
                      </React.Fragment>
                    );
                  })}
                </Grid>
                <RedBox />
              </TableWrap>
            </Pane>
            <Pane $w={426} $dark>
              <PaneHead><PaneTitle $ml={8}>Database</PaneTitle><PaneTools /></PaneHead>
              <ToolRow $h={29} $pt={2}>
                <Slot $w={30}><PlusDrop /></Slot><Slot $w={22}><Copy /></Slot>
                <Sep $ml={5} />
                <Slot $w={32}><Sync /></Slot><Slot $w={20}><DbWrench /></Slot><Slot $w={32}><Stop /></Slot>
                <Sep />
                <Slot $w={32}><TableI /></Slot><Slot $w={20}><Pencil /></Slot><Slot $w={32}><QL /></Slot>
                <Sep />
                <Slot $w={32}><Funnel /></Slot>
              </ToolRow>
              <TreeView items={dbTree} gap={5} top={1} />
            </Pane>
          </TopSplit>
          <RunPanel>
            <PaneHead>
              <RunTitle>Run:</RunTitle>
              <RunTab><DjangoI /><span>untitled16</span><TabClose>✕</TabClose></RunTab>
              <Push />
              <Slot $w={26}><Gear /></Slot><Slot $w={26}><Minus /></Slot>
            </PaneHead>
            <RunBody>
              <ActionCol $pt={4}>
                <ActionBtn $h={25}><ReRun /></ActionBtn>
                <ActionBtn $h={25}><Stop /></ActionBtn>
                <ActionBtn $h={25}><Pause /></ActionBtn>
                <ActionRule />
                <ActionBtn $h={24}><Layout /></ActionBtn>
                <ActionRule />
                <ActionBtn $h={25}><Pin /></ActionBtn>
              </ActionCol>
              <ActionCol $pt={1}>
                <ActionBtn><Arrow d="u" /></ActionBtn>
                <ActionBtn><Arrow d="d" /></ActionBtn>
                <ActionBtn><Wrap /></ActionBtn>
                <ActionBtn $on><ScrollEnd /></ActionBtn>
                <ActionBtn><Printer /></ActionBtn>
                <ActionBtn><Trash /></ActionBtn>
              </ActionCol>
              <Console>
                <Line><Red><Mono t="Watching for file changes with StatReloader" /></Red></Line>
                <Line />
                <Line><Mono t="System check identified no issues (0 silenced)." /></Line>
                <Line><Mono t="August 14, 2021 - 14:32:06" /></Line>
                <Line><Mono t="Django version 2.2, using settings 'untitled16.settings'" /></Line>
                <Line><Mono t="Starting development server at " /><Link href="#"><Mono t="http://127.0.0.1:8000/" /></Link></Line>
                <Line><Mono t="Quit the server with CTRL-BREAK." /></Line>
                <Line><BrightRed><Mono t={'[14/Aug/2021 14:32:09] "GET /query/book/ HTTP/1.1" 200 2'} /></BrightRed></Line>
                <Ime>
                  <ImeLogo>
                    <path d="M6 3 28 0q3 0 3.500 3L31 23q0 2-2 3L8 30q-3 .5-4-2L1 8q-.5-3 5-5z" fill="#f4581c" />
                    <path d="M25 8C19 5 9 7 9 11c0 5 14 2 14 7 0 4-10 5-16 2" fill="none" stroke="#fff" strokeWidth="3.500" />
                  </ImeLogo>
                  <ImeZh>中</ImeZh>
                  <ImeG viewBox="0 0 16 16"><circle cx="4" cy="6" r="2" /><path d="M12 8h3q0 4-3 6l-1-.5q1.500-1.500 1.500-2.500H12z" /></ImeG>
                  <ImeG viewBox="0 0 16 16"><rect x="5" y="0" width="6" height="10" rx="3" /><path d="M3 7q0 5 5 5t5-5M8 12v3M5 15.500h6" fill="none" stroke="#0a6fd8" strokeWidth="1.300" /></ImeG>
                  <ImeG viewBox="0 0 16 16"><path fillRule="evenodd" d="M1 2h14q1 0 1 1v10q0 1-1 1H1q-1 0-1-1V3q0-1 1-1zM2 5v1.500h2V5zM5 5v1.500h2V5zM8 5v1.500h2V5zM11 5v1.500h3V5zM2 8v1.500h2V8zM5 8v1.500h2V8zM8 8v1.500h2V8zM11 8v1.500h3V8zM4 11v1h8v-1z" /></ImeG>
                  <ImeG viewBox="0 0 16 16"><rect x="0" y="0" width="7.500" height="7.500" rx="2" /><rect x="9" y="1" width="6" height="6" rx="1" /><rect x="0" y="8.500" width="7.500" height="7.500" rx="2" /><rect x="8.500" y="8.500" width="7.500" height="7.500" rx="2" /></ImeG>
                </Ime>
              </Console>
              <ScrollGutter />
            </RunBody>
          </RunPanel>
        </Center>
        <RightStripe>
          <StripeTab $white $flip $h={76}><SciI /><VText $flip>SciView</VText></StripeTab>
          <StripeTab $active $flip $h={87}><DbStack c="#8a8a8a" /><VText $flip>Database</VText></StripeTab>
        </RightStripe>
      </Main>
      <ToolWindowBar>
        <TwItem $w={69} $pl={10} $on><PlayDot /><span><u>4</u>: Run</span></TwItem>
        <TwItem $w={92} $pl={11}><ListI /><span><u>6</u>: TODO</span></TwItem>
        <TwItem $w={86} $pl={1}><TermI /><span>Terminal</span></TwItem>
        <TwItem $w={125} $pl={1}><PySnake /><span>Python Console</span></TwItem>
        <TwItem $w={120} $pl={1}><DbConsole /><span>Database Console</span></TwItem>
        <TwRight><Badge>2</Badge><span>Event Log</span></TwRight>
      </ToolWindowBar>
      <StatusBar>
        <Square />
        <span>1 row retrieved starting from 1 in 14 ms (execution: 5 ms, fetching: 9 ms)</span>
        <StatusRight><span>2:5</span><Slot $w={16} $ml={18}><Lock /></Slot><Slot $w={16} $ml={9}><Hector /></Slot></StatusRight>
      </StatusBar>
      <Taskbar><TaskActive /><Clock>14:38</Clock></Taskbar>
    </Page>
  );
}
